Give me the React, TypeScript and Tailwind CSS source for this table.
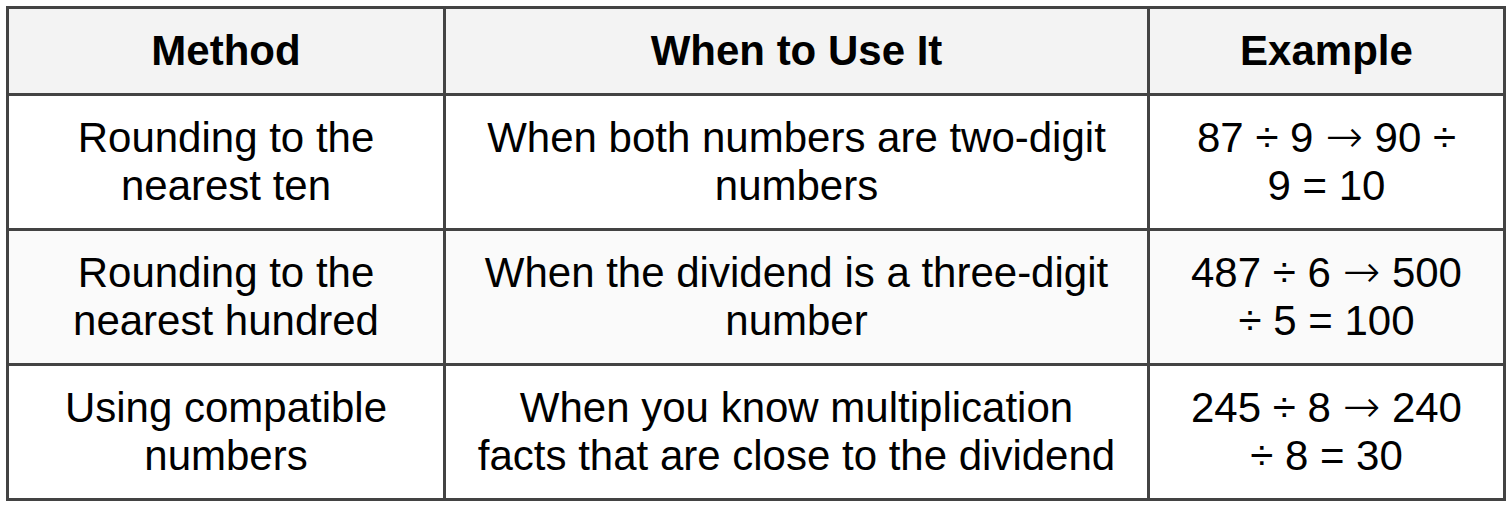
const HEADERS = ["Method", "When to Use It", "Example"];

const ROWS: { method: string; when: string; example: [string, string]; shade: boolean }[] = [
  {
    method: "Rounding to the nearest ten",
    when: "When both numbers are two-digit numbers",
    example: ["87 ÷ 9", "90 ÷ 9 = 10"],
    shade: false,
  },
  {
    method: "Rounding to the nearest hundred",
    when: "When the dividend is a three-digit number",
    example: ["487 ÷ 6", "500 ÷ 5 = 100"],
    shade: true,
  },
  {
    method: "Using compatible numbers",
    when: "When you know multiplication facts that are close to the dividend",
    example: ["245 ÷ 8", "240 ÷ 8 = 30"],
    shade: false,
  },
];

const cell =
  "flex items-center justify-center text-center text-[42px] leading-[48px] text-black";
const pads = ["px-[26px]", "px-[28px]", "px-[34px]"];

export default function App() {
  return (
    <div className="min-h-screen bg-white pl-[6px] pt-[6px] font-['Liberation_Sans',Arial,sans-serif]">
      <div className="grid w-[1500px] grid-cols-[434px_701px_353px] grid-rows-[84px_132px_132px_132px] gap-[3px] bg-[#434343] p-[3px]">
        {HEADERS.map((h, i) => (
          <div key={h} className={`${cell} ${pads[i]} bg-[#f3f3f3] font-bold`}>
            {h}
          </div>
        ))}
        {ROWS.map((r) => {
          const bg = r.shade ? "bg-[#fafafa]" : "bg-white";
          return [
            <div key={r.method + "m"} className={`${cell} ${pads[0]} ${bg}`}>
              {r.method}
            </div>,
            <div key={r.method + "w"} className={`${cell} ${pads[1]} ${bg}`}>
              {r.when}
            </div>,
            <div key={r.method + "e"} className={`${cell} ${pads[2]} ${bg}`}>
              <p>
                {r.example[0]}{" "}
                <span className="font-['DejaVu_Sans',sans-serif] font-extralight text-[45px] leading-[0px]">→</span>{" "}
                {r.example[1]}
              </p>
            </div>,
          ];
        })}
      </div>
    </div>
  );
}
